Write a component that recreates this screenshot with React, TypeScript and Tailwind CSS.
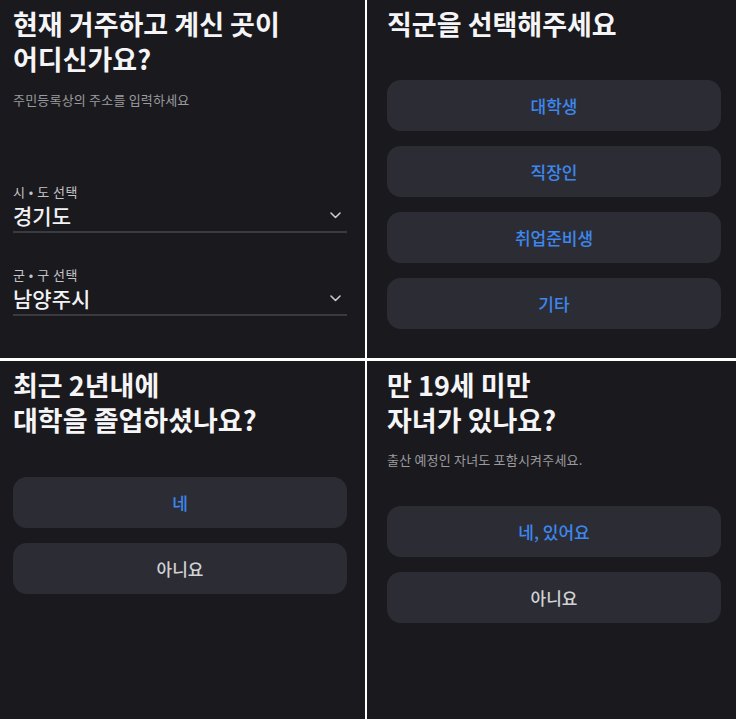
import React from "react";

const font = { fontFamily: '"Noto Sans CJK KR", "Noto Sans", sans-serif' };

function Chevron() {
  return (
    <svg width="11" height="7" viewBox="0 0 11 7" fill="none" className="mr-[6px]">
      <polyline points="1,1 5.5,5.5 10,1" stroke="#c9c9ce" strokeWidth="1.6" strokeLinecap="round" strokeLinejoin="round" />
    </svg>
  );
}

function Choice({ label, muted = false }: { label: string; muted?: boolean }) {
  return (
    <div
      className={`flex h-[51px] items-center justify-center rounded-[14px] bg-[#2c2d34] text-[17px] font-medium ${
        muted ? "text-[#d2d2d6]" : "text-[#3d87ee]"
      }`}
    >
      {label}
    </div>
  );
}

function Field({ label, value }: { label: string; value: string }) {
  return (
    <div>
      <div className="text-[13px] leading-[18px] tracking-[0.5px] text-[#c4c4c8]">{label}</div>
      <div className="flex items-center justify-between border-b-2 border-[#3a3b41] pb-[2px]">
        <span className="text-[21px] font-medium leading-[28px] text-[#f2f2f4]">{value}</span>
        <Chevron />
      </div>
    </div>
  );
}

// each line is its own block so the two lines keep a fixed 35px pitch
function Title({ lines }: { lines: string[] }) {
  return (
    <h1 className="text-[27px] font-bold text-[#f5f5f7]">
      {lines.map((l) => (
        <div key={l} className="h-[35px] leading-[35px]">
          {l}
        </div>
      ))}
    </h1>
  );
}

export default function App() {
  return (
    <div style={font} className="grid h-[719px] w-[736px] grid-cols-[365px_369px] grid-rows-[358px_358px] gap-x-[2px] gap-y-[3px] bg-white">
      {/* 주소 */}
      <section className="bg-[#1a1a1e] pl-[13px] pr-[18px] pt-[6px]">
        <Title lines={["현재 거주하고 계신 곳이", "어디신가요?"]} />
        <p className="mt-[14px] text-[13px] leading-[20px] tracking-[0.2px] text-[#9a9a9f]">주민등록상의 주소를 입력하세요</p>
        <div className="mt-[73px]">
          <Field label="시 • 도 선택" value="경기도" />
        </div>
        <div className="mt-[33px]">
          <Field label="군 • 구 선택" value="남양주시" />
        </div>
      </section>

      {/* 직군 */}
      <section className="bg-[#1a1a1e] pl-[20px] pr-[15px] pt-[6px]">
        <Title lines={["직군을 선택해주세요"]} />
        <div className="mt-[39px] flex flex-col gap-[15px]">
          <Choice label="대학생" />
          <Choice label="직장인" />
          <Choice label="취업준비생" />
          <Choice label="기타" />
        </div>
      </section>

      {/* 졸업 */}
      <section className="bg-[#1a1a1e] pl-[13px] pr-[18px] pt-[6px]">
        <Title lines={["최근 2년내에", "대학을 졸업하셨나요?"]} />
        <div className="mt-[40px] flex flex-col gap-[15px]">
          <Choice label="네" />
          <Choice label="아니요" muted />
        </div>
      </section>

      {/* 자녀 */}
      <section className="bg-[#1a1a1e] pl-[20px] pr-[15px] pt-[6px]">
        <Title lines={["만 19세 미만", "자녀가 있나요?"]} />
        <p className="mt-[13px] text-[13px] leading-[20px] tracking-[0.2px] text-[#9a9a9f]">출산 예정인 자녀도 포함시켜주세요.</p>
        <div className="mt-[36px] flex flex-col gap-[15px]">
          <Choice label="네, 있어요" />
          <Choice label="아니요" muted />
        </div>
      </section>
    </div>
  );
}
